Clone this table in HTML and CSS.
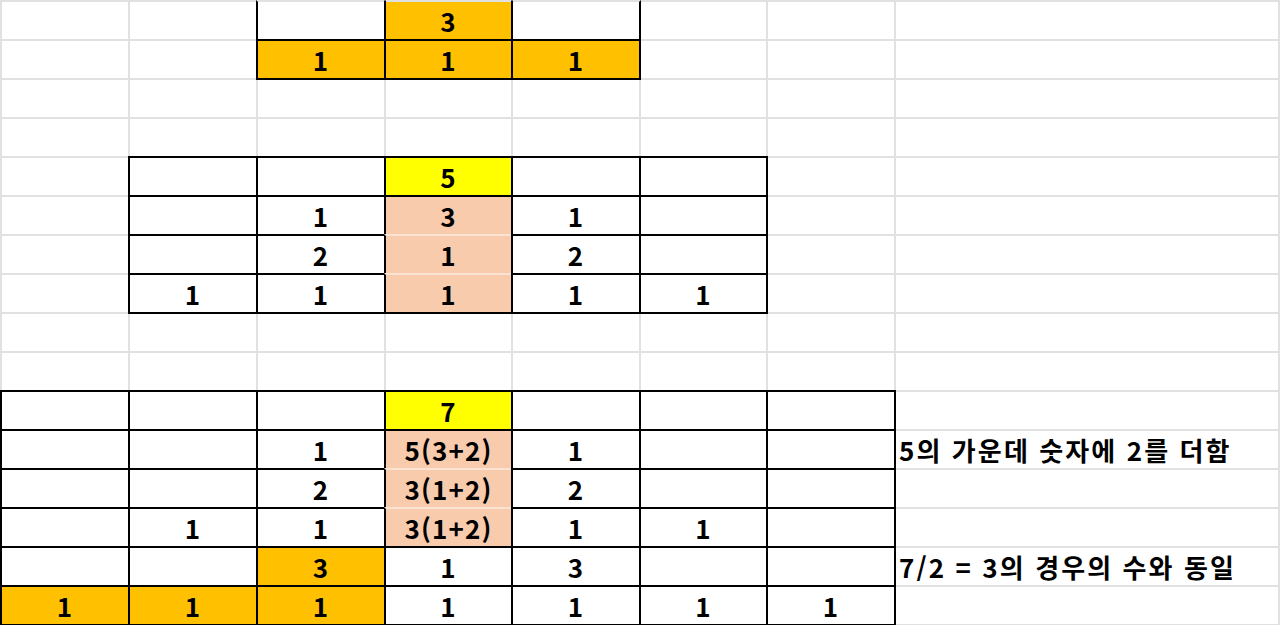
FILE: index.html
```html
<!DOCTYPE html>
<html lang="ko">
<head>
<meta charset="utf-8">
<title>Sheet</title>
<link rel="stylesheet" href="styles.css">
</head>
<body>
<div class="sheet">
  <!-- row 1 -->
  <div class="c"></div><div class="c"></div><div class="c k nt"></div><div class="c k nt o">3</div><div class="c k nt"></div><div class="c"></div><div class="c"></div><div class="c"></div>
  <!-- row 2 -->
  <div class="c"></div><div class="c"></div><div class="c k o">1</div><div class="c k o">1</div><div class="c k o">1</div><div class="c"></div><div class="c"></div><div class="c"></div>
  <!-- row 3 -->
  <div class="c"></div><div class="c"></div><div class="c"></div><div class="c"></div><div class="c"></div><div class="c"></div><div class="c"></div><div class="c"></div>
  <!-- row 4 -->
  <div class="c"></div><div class="c"></div><div class="c"></div><div class="c"></div><div class="c"></div><div class="c"></div><div class="c"></div><div class="c"></div>
  <!-- row 5 -->
  <div class="c"></div><div class="c k"></div><div class="c k"></div><div class="c k y">5</div><div class="c k"></div><div class="c k"></div><div class="c"></div><div class="c"></div>
  <!-- row 6 -->
  <div class="c"></div><div class="c k"></div><div class="c k">1</div><div class="c k p pt">3</div><div class="c k">1</div><div class="c k"></div><div class="c"></div><div class="c"></div>
  <!-- row 7 -->
  <div class="c"></div><div class="c k"></div><div class="c k">2</div><div class="c k p">1</div><div class="c k">2</div><div class="c k"></div><div class="c"></div><div class="c"></div>
  <!-- row 8 -->
  <div class="c"></div><div class="c k">1</div><div class="c k">1</div><div class="c k p pb">1</div><div class="c k">1</div><div class="c k">1</div><div class="c"></div><div class="c"></div>
  <!-- row 9 -->
  <div class="c"></div><div class="c"></div><div class="c"></div><div class="c"></div><div class="c"></div><div class="c"></div><div class="c"></div><div class="c"></div>
  <!-- row 10 -->
  <div class="c"></div><div class="c"></div><div class="c"></div><div class="c"></div><div class="c"></div><div class="c"></div><div class="c"></div><div class="c"></div>
  <!-- row 11 -->
  <div class="c k"></div><div class="c k"></div><div class="c k"></div><div class="c k y">7</div><div class="c k"></div><div class="c k"></div><div class="c k"></div><div class="c"></div>
  <!-- row 12 -->
  <div class="c k"></div><div class="c k"></div><div class="c k">1</div><div class="c k p pt">5(3+2)</div><div class="c k">1</div><div class="c k"></div><div class="c k"></div><div class="c note">5의 가운데 숫자에 2를 더함</div>
  <!-- row 13 -->
  <div class="c k"></div><div class="c k"></div><div class="c k">2</div><div class="c k p">3(1+2)</div><div class="c k">2</div><div class="c k"></div><div class="c k"></div><div class="c"></div>
  <!-- row 14 -->
  <div class="c k"></div><div class="c k">1</div><div class="c k">1</div><div class="c k p">3(1+2)</div><div class="c k">1</div><div class="c k">1</div><div class="c k"></div><div class="c"></div>
  <!-- row 15 -->
  <div class="c k"></div><div class="c k"></div><div class="c k o">3</div><div class="c k">1</div><div class="c k">3</div><div class="c k"></div><div class="c k"></div><div class="c note">7/2 = 3의 경우의 수와 동일</div>
  <!-- row 16 -->
  <div class="c k o">1</div><div class="c k o">1</div><div class="c k o">1</div><div class="c k">1</div><div class="c k">1</div><div class="c k">1</div><div class="c k">1</div><div class="c"></div>
</div>
</body>
</html>
```

FILE: styles.css
```css
html, body {
  margin: 0;
  padding: 0;
  background: #ffffff;
  overflow: hidden;
}

.sheet {
  width: 1280px;
  box-sizing: border-box;
  display: grid;
  grid-template-columns: 128px 128px 128px 127px 128px 127px 128px 1fr;
  grid-auto-rows: 39px;
  border-top: 2px solid #e1e1e1;
  border-left: 2px solid #e1e1e1;
  font-family: "Noto Sans CJK KR", "Noto Sans", sans-serif;
  font-weight: 700;
  font-size: 26px;
  letter-spacing: 1.2px;
  color: #000;
}

.c {
  position: relative;
  box-sizing: border-box;
  border-right: 2px solid #e1e1e1;
  border-bottom: 2px solid #e1e1e1;
  display: flex;
  align-items: center;
  justify-content: center;
  line-height: 1;
  white-space: nowrap;
  background: #ffffff;
}

.k::after {
  content: "";
  position: absolute;
  top: -2px;
  left: -2px;
  right: -2px;
  bottom: -2px;
  border: 2px solid #000;
  pointer-events: none;
}

.nt::after {
  border-top-color: transparent;
}

.o { background: #ffc000; }
.y { background: #ffff00; }
.p { background: #f8cbad; }

.p::after {
  border-top-color: #fbe3d4;
  border-bottom-color: #fbe3d4;
}

.pt::after { border-top-color: #000; }
.pb::after { border-bottom-color: #000; }

.note {
  justify-content: flex-start;
  padding-left: 3px;
  letter-spacing: 2.1px;
}
```
